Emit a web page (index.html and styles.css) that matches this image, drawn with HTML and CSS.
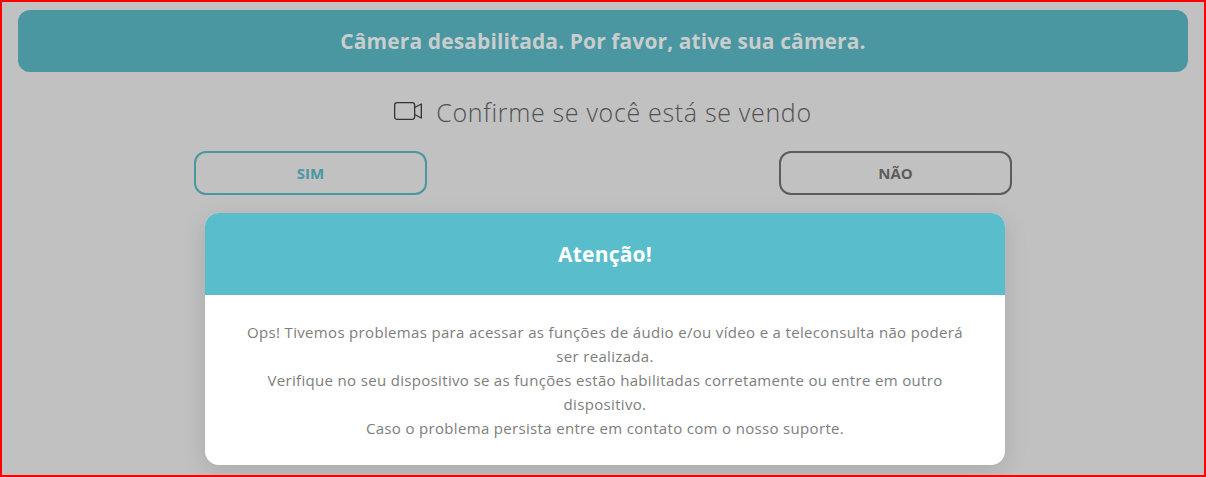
FILE: index.html
```html
<!DOCTYPE html>
<html lang="pt-BR">
<head>
  <meta charset="UTF-8">
  <title>Teleconsulta</title>
  <link rel="stylesheet" href="styles.css">
</head>
<body>

  <div class="page">
    <div class="alert-bar">Câmera desabilitada. Por favor, ative sua câmera.</div>

    <div class="confirm-title">
      <svg class="camera-icon" width="28" height="18" viewBox="0 0 28 18" fill="none" stroke="#333" stroke-width="1.3" stroke-linejoin="round">
        <rect x="0.65" y="0.65" width="20" height="16.7" rx="2.5"/>
        <path d="M20.6 5.5 27.35 2V16L20.6 12.5"/>
      </svg>
      <span>Confirme se você está se vendo</span>
    </div>

    <div class="confirm-buttons">
      <button class="btn btn-yes">SIM</button>
      <button class="btn btn-no">NÃO</button>
    </div>

    <div class="modal">
      <div class="modal-header">Atenção!</div>
      <div class="modal-body">
        Ops! Tivemos problemas para acessar as funções de áudio e/ou vídeo e a teleconsulta não poderá ser realizada.<br>
        Verifique no seu dispositivo se as funções estão habilitadas corretamente ou entre em outro dispositivo.<br>
        Caso o problema persista entre em contato com o nosso suporte.
      </div>
    </div>
  </div>

</body>
</html>
```

FILE: styles.css
```css
:root {
  --overlay: #c1c1c1;
  --teal-dark: #4a96a1;
  --teal: #5abdcb;
  --text: #5c5c5c;
  --muted: #7d7d7d;
}

html, body {
  height: 100%;
}

body {
  margin: 0;
  font-family: 'Open Sans', sans-serif;
  background: var(--overlay);
  color: var(--text);
  overflow: hidden;
}

.page {
  box-sizing: border-box;
  height: 100%;
  border: 2px solid #f00;
  padding: 8px 16px 0;
  overflow: hidden;
}

.alert-bar {
  height: 62px;
  line-height: 62px;
  background: var(--teal-dark);
  border-radius: 12px;
  text-align: center;
  font-size: 21px;
  font-weight: 700;
  letter-spacing: 0.1px;
  color: #c8cdcd;
}

.confirm-title {
  display: flex;
  justify-content: center;
  align-items: center;
  gap: 14px;
  height: 79px;
  font-size: 25px;
  font-weight: 300;
  letter-spacing: 0.68px;
  color: #505050;
}

.camera-icon {
  margin-top: -1px;
}

.confirm-buttons {
  display: flex;
  justify-content: space-between;
  width: 818px;
  margin: 0 auto 18px;
}

.btn {
  width: 233px;
  height: 44px;
  background: transparent;
  border: 2px solid var(--text);
  border-radius: 12px;
  font-family: inherit;
  font-size: 15px;
  font-weight: 700;
  color: var(--text);
}

.btn-yes {
  border-color: var(--teal-dark);
  color: var(--teal-dark);
}

.modal {
  width: 800px;
  height: 252px;
  margin-left: 187px;
  background: #fff;
  border-radius: 14px;
  overflow: hidden;
  box-shadow: 0 6px 24px rgba(0, 0, 0, 0.12);
}

.modal-header {
  height: 82px;
  line-height: 82px;
  background: var(--teal);
  text-align: center;
  font-size: 21px;
  font-weight: 700;
  letter-spacing: 0.2px;
  color: #fff;
}

.modal-body {
  padding: 25px 40px;
  text-align: center;
  font-size: 15px;
  letter-spacing: 0.33px;
  line-height: 24px;
  color: var(--muted);
}
```
